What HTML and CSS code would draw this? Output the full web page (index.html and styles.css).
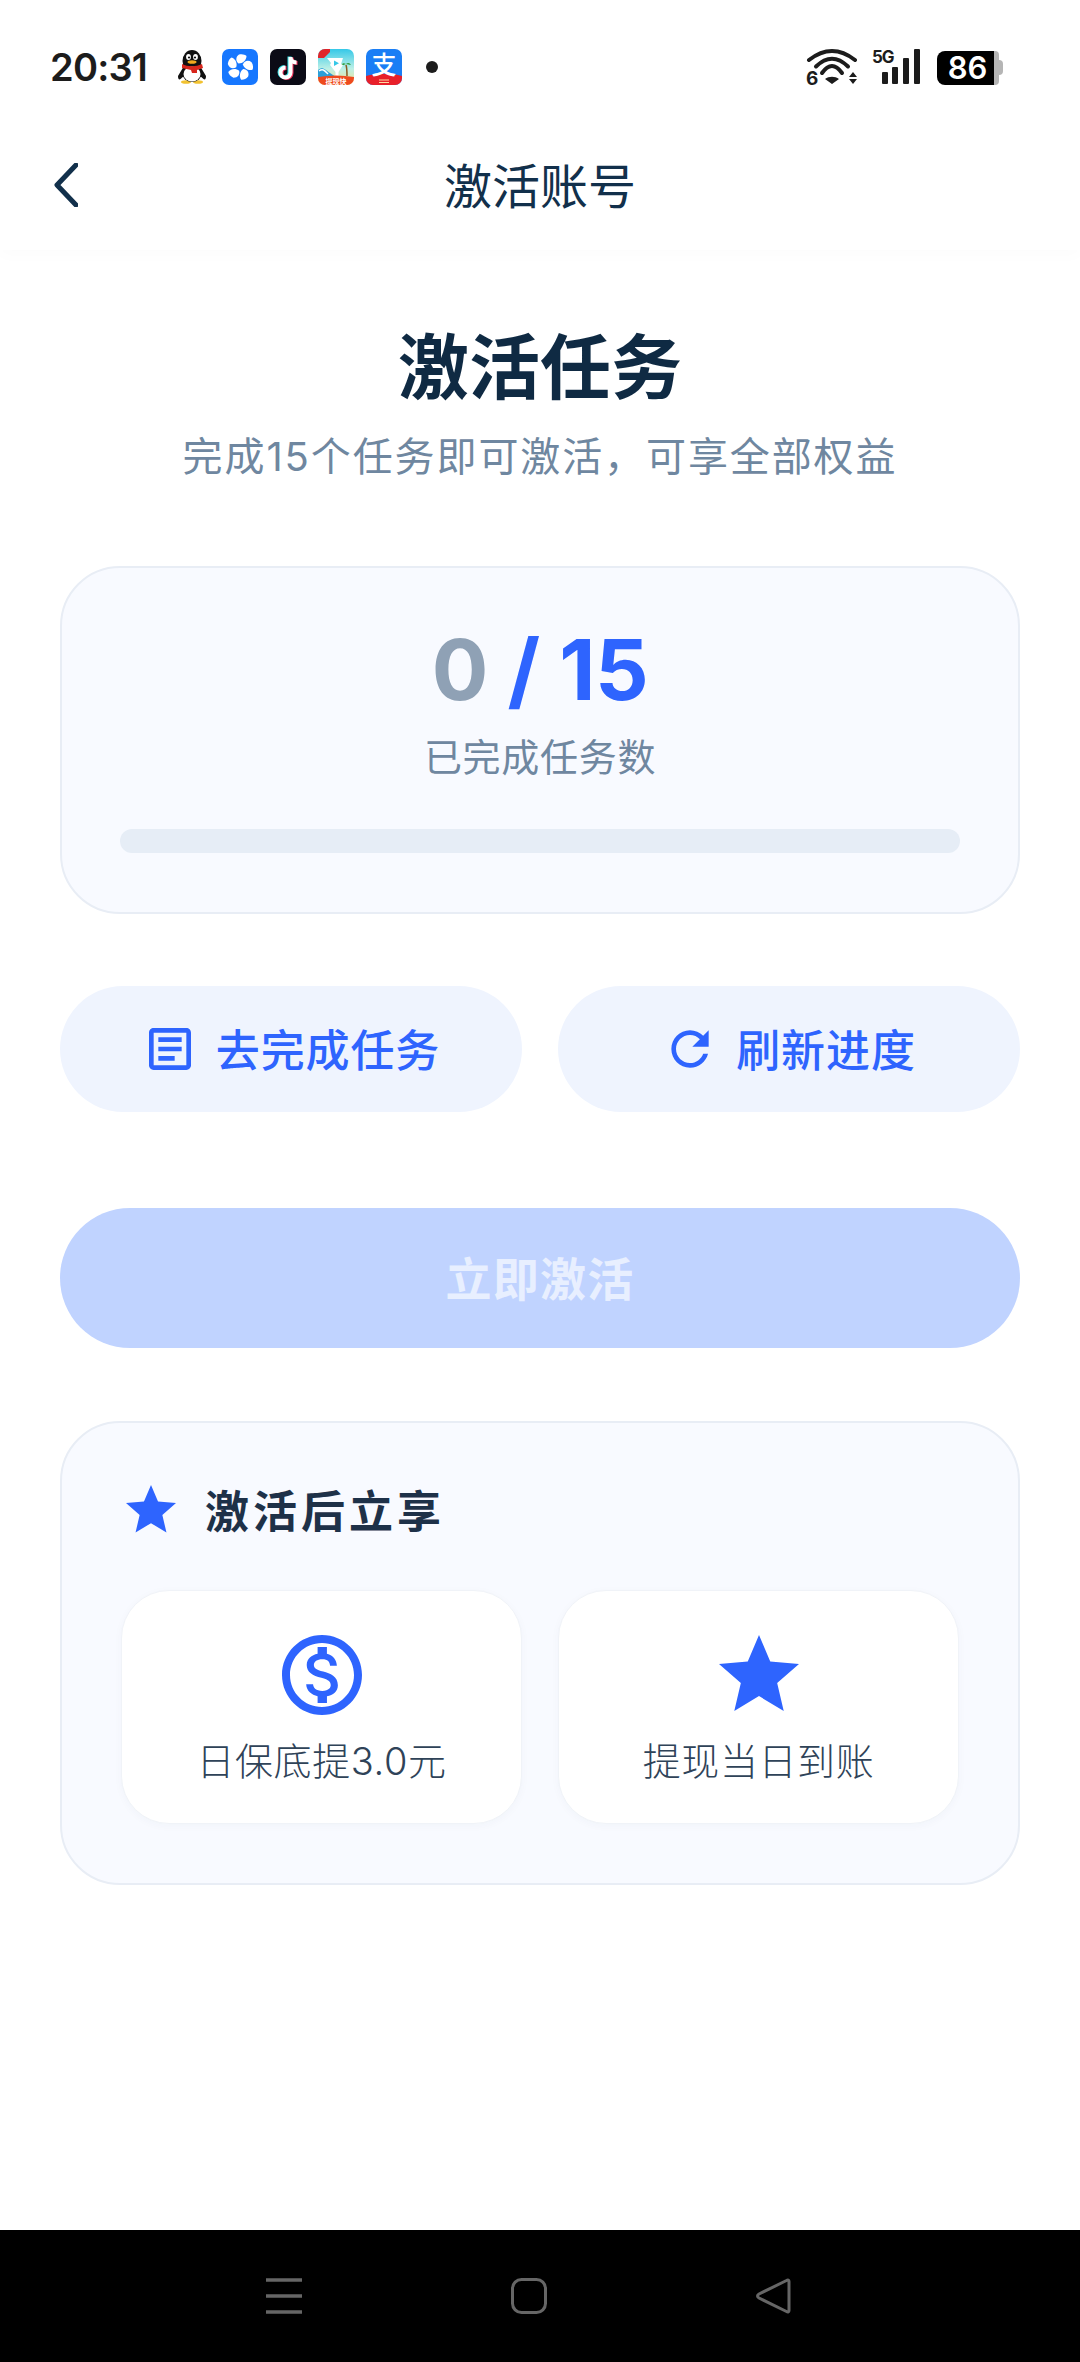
FILE: index.html
```html
<!DOCTYPE html>
<html lang="zh-CN">
<head>
<meta charset="utf-8">
<title>激活账号</title>
<link rel="stylesheet" href="styles.css">
</head>
<body>
<div class="status">
  <span class="time">20:31</span>
  <div class="apps">
    <svg class="app" viewBox="0 0 36 36"><ellipse cx="12" cy="33" rx="5" ry="1.800" fill="#f2c230"/><ellipse cx="24" cy="33" rx="5" ry="1.800" fill="#f2c230"/><path d="M10 17 4 27c0 3 1 4 2.500 3L11 26zM26 17l6 10c0 3-1 4-2.500 3L25 26z" fill="#111"/><ellipse cx="18" cy="12" rx="9.500" ry="11" fill="#111"/><ellipse cx="18" cy="24" rx="10" ry="9" fill="#111"/><ellipse cx="18" cy="25" rx="8.500" ry="7.500" fill="#fff"/><path d="M8 15c6 3 14 3 20 0l1 4-6 2 0 3h-5l-1-3-9-2z" fill="#d8261c"/><ellipse cx="14.500" cy="8" rx="2.400" ry="3" fill="#fff"/><ellipse cx="21.500" cy="8" rx="2.400" ry="3" fill="#fff"/><circle cx="15" cy="8.500" r="1.100" fill="#111"/><circle cx="21" cy="8.500" r="1.100" fill="#111"/><ellipse cx="18" cy="13" rx="4.500" ry="1.800" fill="#f2a91e"/></svg>
    <svg class="app" viewBox="0 0 36 36"><rect width="36" height="36" rx="7" fill="#1677ff"/><g fill="#fff"><path d="M16.500 14.500C13.500 12 13.500 8 17 5.500c3-.8 6 0 7.500 1.500 0 4-3.500 7.500-8 7.500z"/><path d="M16.500 14.500C13.500 12 13.500 8 17 5.500c3-.8 6 0 7.500 1.500 0 4-3.500 7.500-8 7.500z" transform="rotate(72 18 18)"/><path d="M16.500 14.500C13.500 12 13.500 8 17 5.500c3-.8 6 0 7.500 1.500 0 4-3.500 7.500-8 7.500z" transform="rotate(144 18 18)"/><path d="M16.500 14.500C13.500 12 13.500 8 17 5.500c3-.8 6 0 7.500 1.500 0 4-3.500 7.500-8 7.500z" transform="rotate(216 18 18)"/><path d="M16.500 14.500C13.500 12 13.500 8 17 5.500c3-.8 6 0 7.500 1.500 0 4-3.500 7.500-8 7.500z" transform="rotate(288 18 18)"/></g></svg>
    <svg class="app" viewBox="0 0 36 36"><rect width="36" height="36" rx="7" fill="#0b0b16"/><g fill="none" stroke-width="4"><path d="M19.500 7.500v15.500a5 5 0 1 1-5-5M19.500 7.500c0 3 2.500 5.500 6 5.500" stroke="#35e0e6"/><path d="M21.500 8.500v15.500a5 5 0 1 1-5-5M21.500 8.500c0 3 2.500 5.500 6 5.500" stroke="#f2315a"/><path d="M20.500 8v15.500a5 5 0 1 1-5-5M20.500 8c0 3 2.500 5.500 6 5.500" stroke="#fff"/></g></svg>
    <svg class="app" viewBox="0 0 36 36"><defs><linearGradient id="sky" x1="0" y1="0" x2="0" y2="1"><stop offset="0" stop-color="#35c8e8"/><stop offset=".55" stop-color="#bdf0e6"/><stop offset="1" stop-color="#f6e08a"/></linearGradient></defs><rect width="36" height="36" rx="7" fill="url(#sky)"/><path d="M0 21c5-4 7 0 12 3l6 4H0z" fill="#2b9fd8"/><path d="M1 22c4-3 6 0 9 3" stroke="#fff" stroke-width="1.500" fill="none"/><path d="M29 27c0-5 0-8-1-11" stroke="#8a5a20" stroke-width="1.500" fill="none"/><path d="M28 15c-3-2-4 0-5 1 2 0 3 0 5-1 2-2 4-1 5 1z" fill="#2e9c3c"/><path d="M9 9h16l-2 6 2 1-4.500 7v5h-3v-5L12 16l1-2z" fill="#fff"/><path d="M16 11.500l5 2.700-5 2.800z" fill="#35c8e8"/><path d="M0 28c12-2 24-2 36 0v1a7 7 0 0 1-7 7H7a7 7 0 0 1-7-7z" fill="#ee4a1e"/><path d="M0 7a7 7 0 0 1 7-7h5v3L6 9H0z" fill="#e0242a"/><text x="18" y="34.500" class="tiny">提现快</text></svg>
    <div class="alipay">
      <svg class="app" viewBox="0 0 36 36"><rect width="36" height="36" rx="7" fill="#1a7ef5"/><path d="M0 27c10-3 26-3 36 0v2a7 7 0 0 1-7 7H7a7 7 0 0 1-7-7z" fill="#e8202a"/><path d="M13 31h10M13 33.500h10" stroke="#ffd9a0" stroke-width="1.200" fill="none"/></svg>
      <span class="zhi">支</span>
    </div>
    <span class="dot"></span>
  </div>
  <div class="sys">
    <svg class="wifi" viewBox="0 0 54 44"><g fill="none" stroke="#1c1c1c" stroke-width="4" stroke-linecap="round"><path d="M4 12Q27-6 50 12"/><path d="M11 18.500Q27 3 43 18.500"/><path d="M17 25Q27 11 37 25"/></g><path d="M27 36l-7-5c4-3 10-3 14 0zM48 24l4 5h-8zM48 36l4-5h-8z" fill="#1c1c1c"/><text x="1" y="37" class="six">6</text></svg>
    <svg class="signal" viewBox="0 0 50 38"><text x="0" y="15" class="fiveg">5G</text><rect x="10" y="24" width="6" height="12" rx="1" fill="#1c1c1c"/><rect x="20" y="19" width="6" height="17" rx="1" fill="#1c1c1c"/><rect x="31" y="10" width="6" height="26" rx="1" fill="#1c1c1c"/><rect x="42" y="1" width="6" height="35" rx="1" fill="#1c1c1c"/></svg>
    <div class="battery"><span class="level">86</span><span class="cap"></span></div>
  </div>
</div>

<header class="head">
  <svg class="back" viewBox="0 0 24 44"><path d="M22 2 3 22l19 20" fill="none" stroke="#12304b" stroke-width="5" stroke-linecap="round" stroke-linejoin="round"/></svg>
  <h2 class="head-title">激活账号</h2>
</header>

<main class="page">
  <h1 class="title">激活任务</h1>
  <p class="sub">完成15个任务即可激活&#xFF0C;可享全部权益</p>

  <section class="card progress">
    <div class="count"><span class="count-done">0</span> <span class="count-all">/ 15</span></div>
    <div class="count-label">已完成任务数</div>
    <div class="bar"></div>
  </section>

  <div class="actions">
    <button class="pill">
      <svg class="pill-icon" viewBox="0 0 24 24"><path d="M19 5v14H5V5h14m0-2H5c-1.100 0-2 .9-2 2v14c0 1.100.9 2 2 2h14c1.100 0 2-.9 2-2V5c0-1.100-.9-2-2-2z"/><path d="M14 17H7v-2h7v2zm3-4H7v-2h10v2zm0-4H7V7h10v2z"/></svg>
      <span>去完成任务</span>
    </button>
    <button class="pill">
      <svg class="pill-icon" viewBox="0 0 24 24"><path d="M17.650 6.350C16.200 4.900 14.210 4 12 4c-4.420 0-7.990 3.580-7.990 8s3.570 8 7.990 8c3.730 0 6.840-2.550 7.730-6h-2.080c-.82 2.330-3.040 4-5.650 4-3.310 0-6-2.690-6-6s2.690-6 6-6c1.660 0 3.140.69 4.220 1.780L13 11h7V4l-2.350 2.350z"/></svg>
      <span>刷新进度</span>
    </button>
  </div>

  <button class="primary">立即激活</button>

  <section class="card perks">
    <div class="perks-head">
      <svg class="perks-star" viewBox="0 0 24 24"><path d="M12 17.270 18.180 21l-1.640-7.030L22 9.240l-7.190-.61L12 2 9.190 8.630 2 9.240l5.460 4.730L5.820 21z"/></svg>
      <h3 class="perks-title">激活后立享</h3>
    </div>
    <div class="tiles">
      <div class="tile">
        <svg class="tile-icon" viewBox="0 0 24 24"><path d="M12 2C6.480 2 2 6.480 2 12s4.480 10 10 10 10-4.480 10-10S17.520 2 12 2zm0 18c-4.410 0-8-3.590-8-8s3.590-8 8-8 8 3.590 8 8-3.590 8-8 8zm.31-8.860c-1.770-.45-2.340-.94-2.340-1.670 0-.84.79-1.430 2.100-1.430 1.380 0 1.900.66 1.940 1.640h1.710c-.05-1.340-.87-2.570-2.490-2.970V5H10.900v1.690c-1.510.32-2.720 1.300-2.720 2.810 0 1.790 1.490 2.690 3.660 3.210 1.950.46 2.340 1.150 2.340 1.870 0 .53-.39 1.390-2.100 1.390-1.600 0-2.230-.72-2.320-1.640H8.040c.1 1.700 1.360 2.660 2.860 2.970V19h2.340v-1.670c1.520-.29 2.720-1.160 2.730-2.770-.01-2.200-1.900-2.960-3.660-3.420z"/></svg>
        <div class="tile-label">日保底提3.0元</div>
      </div>
      <div class="tile">
        <svg class="tile-icon" viewBox="0 0 24 24"><path d="M12 17.270 18.180 21l-1.640-7.030L22 9.240l-7.190-.61L12 2 9.190 8.630 2 9.240l5.460 4.730L5.820 21z"/></svg>
        <div class="tile-label">提现当日到账</div>
      </div>
    </div>
  </section>
</main>

<nav class="nav">
  <svg class="nav-icon" viewBox="0 0 36 36"><path d="M0 2h36M0 18h36M0 34h36" stroke="#666" stroke-width="3.500" fill="none"/></svg>
  <svg class="nav-icon" viewBox="0 0 36 36"><rect x="1.500" y="1.500" width="33" height="33" rx="9" stroke="#666" stroke-width="3" fill="none"/></svg>
  <svg class="nav-icon" viewBox="0 0 36 36"><path d="M33 3.500c0-1.500-1-2-2.500-1L3 16c-2 1.200-2 2.800 0 4l27.500 13.500c1.500 1 2.500.5 2.500-1z" stroke="#666" stroke-width="3" fill="none" stroke-linejoin="round"/></svg>
</nav>
</body>
</html>
```

FILE: styles.css
```css
* { box-sizing: border-box; }
html, body { margin: 0; height: 2362px; }
body {
  display: flex;
  flex-direction: column;
  background: #fff;
  font-family: Inter, "Noto Sans CJK SC", sans-serif;
  overflow: hidden;
}

/* status bar */
.status {
  height: 122px;
  padding: 49px 77px 0 50px;
  display: flex;
  align-items: flex-start;
  flex: none;
}
.time { font-size: 38px; font-weight: 600; line-height: 36px; color: #1c1c1c; letter-spacing: -.8px; width: 98px; }
.apps { display: flex; align-items: center; gap: 12px; margin-left: 26px; height: 36px; }
.app { width: 36px; height: 36px; display: block; }
.tiny { font: 700 7px/8px "Noto Sans CJK SC", sans-serif; fill: #fff; text-anchor: middle; }
.alipay { position: relative; width: 36px; height: 36px; }
.zhi {
  position: absolute; left: 0; right: 0; top: 0;
  text-align: center;
  font: 500 25px/28px "Noto Sans CJK SC", sans-serif; color: #fff;
}
.dot { width: 12px; height: 12px; border-radius: 50%; background: #1c1c1c; margin-left: 12px; }
.sys { margin-left: auto; display: flex; align-items: flex-start; }
.wifi { width: 54px; height: 44px; display: block; margin-top: -1px; margin-bottom: -6px; }
.signal { width: 50px; height: 38px; display: block; margin-left: 13px; margin-top: -1px; }
.six { font: 700 19px Inter, sans-serif; fill: #1c1c1c; }
.fiveg { font: 700 17px Inter, sans-serif; fill: #1c1c1c; letter-spacing: -1px; }
.battery {
  width: 57px; height: 34px; margin: 2px 9px 0 15px;
  background: #000; border-radius: 8px 0 0 8px;
  display: flex; align-items: center; justify-content: center;
  position: relative;
}
.level { font: 600 31px/34px Inter, sans-serif; color: #fff; padding-left: 4px; }
.cap {
  position: absolute; left: 57px; top: 0;
  width: 5px; height: 34px; background: #b5b5b5; border-radius: 0 4px 4px 0;
}
.cap::after {
  content: ""; position: absolute; left: 5px; top: 9px;
  width: 4px; height: 15px; background: #b5b5b5; border-radius: 0 4px 4px 0;
}

/* header */
.head {
  height: 128px;
  flex: none;
  display: flex;
  align-items: center;
  justify-content: center;
  position: relative;
  box-shadow: 0 6px 14px rgba(20, 50, 90, .015);
}
.back { position: absolute; left: 54px; top: 41px; width: 24px; height: 44px; }
.head-title { margin: 0; font-size: 48px; font-weight: 400; line-height: 64px; color: #12304b; position: relative; top: 1px; }

/* page */
.page { flex: 1; padding: 65px 60px 0; }
.title { margin: 0; text-align: center; font-size: 71px; font-weight: 700; line-height: 104px; height: 100px; color: #0f2a43; }
.sub { margin: 12px 0 0; text-align: center; font-size: 40px; line-height: 60px; height: 56px; color: #6f87a0; letter-spacing: 1.9px; font-weight: 400; }

.card { background: #f8faff; border: 2px solid #e8edf5; border-radius: 60px; }
.progress { margin-top: 83px; height: 348px; padding: 52px 60px 0; text-align: center; }
.count { font-size: 84px; font-weight: 700; line-height: 100px; letter-spacing: -.4px; }
.count-done { color: #8fa1b5; }
.count-all { color: #2e64fe; }
.count-label { margin-top: 11px; font-size: 38px; line-height: 52px; color: #6f87a0; letter-spacing: .7px; }
.bar { margin: 46px -2px 0; height: 24px; border-radius: 12px; background: #e6edf6; }

.actions { margin-top: 72px; display: grid; grid-template-columns: 1fr 1fr; gap: 36px; }
.pill {
  height: 126px; border: 0; border-radius: 63px; background: #eff4fe;
  color: #2e64fe; font: 500 44px Inter, "Noto Sans CJK SC", sans-serif;
  letter-spacing: .9px;
  display: flex; align-items: center; justify-content: center; gap: 18px;
  padding: 0 0 2px;
}
.pill-icon { width: 56px; height: 56px; fill: #2e64fe; flex: none; margin-top: 2px; }

.primary {
  display: block; width: 100%; height: 140px; margin-top: 96px;
  border: 0; border-radius: 70px; background: #c0d3ff;
  color: #e8efff; font: 700 46px Inter, "Noto Sans CJK SC", sans-serif;
  letter-spacing: 1.2px;
  padding: 0 0 5px;
}

.perks { margin-top: 73px; height: 464px; padding: 57px 60px 0; }
.perks-head { display: flex; align-items: center; height: 60px; gap: 24px; }
.perks-star { width: 60px; height: 60px; fill: #2e64fe; flex: none; margin-left: -1px; }
.perks-title { margin: 0; font-size: 44px; font-weight: 700; line-height: 64px; height: 60px; color: #1e3148; letter-spacing: 4px; }
.tiles { margin: 50px -1px 0; display: grid; grid-template-columns: 1fr 1fr; gap: 36px; }
.tile {
  height: 234px; background: #fff; border: 1px solid #f0f3f8; border-radius: 48px;
  box-shadow: 0 2px 8px rgba(30, 60, 110, .03);
  display: flex; flex-direction: column; align-items: center; padding-top: 36px;
}
.tile-icon { width: 96px; height: 96px; fill: #2e64fe; flex: none; }
.tile-label { margin-top: 12px; font-size: 38px; font-weight: 300; line-height: 52px; color: #2f4358; letter-spacing: .6px; }

/* system nav */
.nav {
  flex: none; height: 132px; background: #000;
  display: flex; align-items: flex-start;
  padding: 48px 0 0 266px; gap: 209px;
}
.nav-icon { width: 36px; height: 36px; display: block; }
```
